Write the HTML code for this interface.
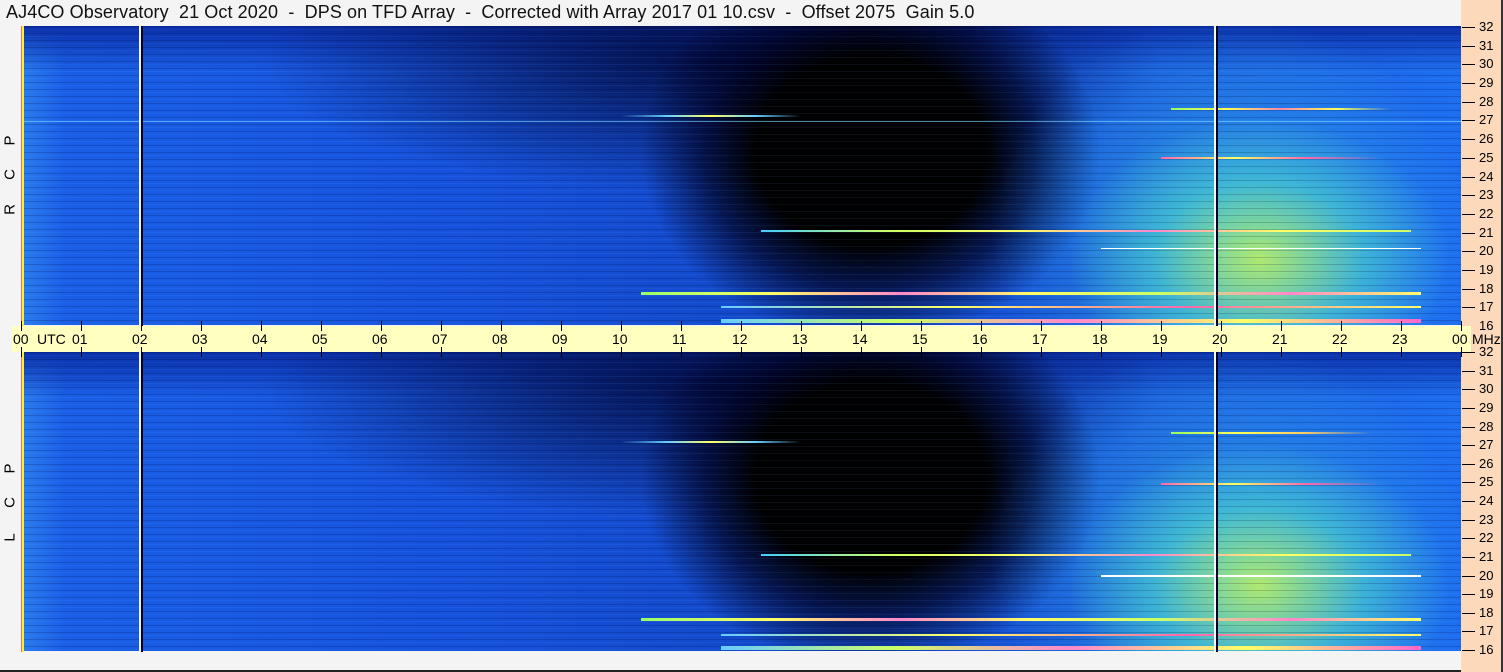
<!DOCTYPE html>
<html><head><meta charset="utf-8"><style>
*{margin:0;padding:0;box-sizing:border-box}
body{width:1503px;height:672px;background:#f4f4f4;position:relative;overflow:hidden;font-family:"Liberation Sans",sans-serif;border-bottom:2px solid #222;}
.title{position:absolute;left:6px;top:2px;font-size:18px;color:#111;white-space:pre;letter-spacing:0.1px}
.right{position:absolute;left:1461px;top:0;width:42px;height:672px;background:#fdd9bb;border-right:2px solid #333}
.spec{position:absolute;left:21px;width:1440px;height:299px;overflow:hidden;
background:
repeating-linear-gradient(to bottom,rgba(0,0,40,.18) 0 1px,transparent 1px 3px,rgba(120,170,255,.08) 3px 4px,transparent 4px 7px),
radial-gradient(ellipse 190px 140px at 86% 78%,rgba(200,250,90,.85),rgba(80,220,200,.55) 55%,transparent 100%),
radial-gradient(ellipse 240px 220px at 84% 70%,rgba(60,200,230,.55),transparent 100%),
radial-gradient(ellipse 230px 190px at 59% 42%,#000 0%,#000 50%,rgba(0,0,30,.7) 72%,transparent 100%),
radial-gradient(ellipse 450px 130px at 48% 12%,rgba(0,5,50,.85),transparent 100%),
linear-gradient(to bottom,#0a2fa8 0%,transparent 15%),
linear-gradient(to right,#2a7cf0 0%,#1a5fe6 3%,#1652dc 30%,#1248c8 55%,#1a5ee0 80%,#1d6ef0 100%);}
.s1{top:26px}.s2{top:352px}
.band{position:absolute;left:12px;top:326px;width:1459px;height:26px;background:#ffffc0}
.vl{position:absolute;width:2px}
.tick{position:absolute;width:1px;background:#000}
.hl{position:absolute;font-size:14px;color:#000;top:331px}
.rt{position:absolute;left:1462px;width:13px;height:1px;background:#000}
.rl{position:absolute;left:1479px;font-size:13px;color:#000}
.lab{position:absolute;left:2px;font-size:15px;color:#000;transform:rotate(-90deg);transform-origin:center;width:16px;text-align:center}
.st{position:absolute;height:2px}
</style></head><body>
<div class="right"></div>
<div class="title">AJ4CO Observatory  21 Oct 2020  -  DPS on TFD Array  -  Corrected with Array 2017 01 10.csv  -  Offset 2075  Gain 5.0</div>

<div class="spec s1">
<div class="st" style="left:600px;top:89px;width:180px;background:linear-gradient(90deg,transparent,#6cf,#ff6,#6cf,transparent)"></div>
<div class="st" style="left:1150px;top:82px;width:220px;background:linear-gradient(90deg,#9f6,#ff5,#f8a,#ff5,transparent)"></div>
<div class="st" style="left:1140px;top:131px;width:220px;background:linear-gradient(90deg,#f6a,#ff6,#f6a,transparent)"></div>
<div class="st" style="left:740px;top:204px;width:650px;background:linear-gradient(90deg,#4cf,#cf6,#ff6,#f8c,#ff6,#cf6)"></div>
<div class="st" style="left:1080px;top:222px;width:320px;height:1px;background:#fff"></div>
<div class="st" style="left:620px;top:266px;width:780px;height:3px;background:linear-gradient(90deg,#9f6,#ff6,#f8c,#ff6,#cf6,#f8c,#ff6)"></div>
<div class="st" style="left:700px;top:280px;width:700px;background:linear-gradient(90deg,#6cf,#ff6,#f6a,#ff6)"></div>
<div class="st" style="left:700px;top:293px;width:700px;height:4px;background:linear-gradient(90deg,#6cf,#cf6,#f8c,#ff6,#f6c)"></div>
<div class="st" style="left:0;top:95px;width:1440px;height:1px;background:rgba(120,220,255,.6)"></div>
</div>
<div class="spec s2">
<div class="st" style="left:600px;top:89px;width:180px;background:linear-gradient(90deg,transparent,#6cf,#ff6,#6cf,transparent)"></div>
<div class="st" style="left:1150px;top:80px;width:200px;background:linear-gradient(90deg,#9f6,#ff5,#fc6,transparent)"></div>
<div class="st" style="left:1140px;top:131px;width:220px;background:linear-gradient(90deg,#f6a,#ff6,#f6a,transparent)"></div>
<div class="st" style="left:740px;top:202px;width:650px;background:linear-gradient(90deg,#4cf,#cf6,#ff6,#f8c,#ff6,#cf6)"></div>
<div class="st" style="left:1080px;top:223px;width:320px;background:#fff"></div>
<div class="st" style="left:620px;top:266px;width:780px;height:3px;background:linear-gradient(90deg,#9f6,#ff6,#f8c,#ff6,#cf6,#f8c,#ff6)"></div>
<div class="st" style="left:700px;top:282px;width:700px;background:linear-gradient(90deg,#6cf,#ff6,#f6a,#ff6)"></div>
<div class="st" style="left:700px;top:294px;width:700px;height:4px;background:linear-gradient(90deg,#6cf,#cf6,#f8c,#ff6,#f6c)"></div>
</div>

<div class="vl" style="left:21px;top:26px;height:626px;width:1px;background:#f66"></div>
<div class="vl" style="left:22px;top:26px;height:626px;background:#fe3"></div>
<div class="vl" style="left:139px;top:26px;height:626px;background:#e8f4ff"></div>
<div class="vl" style="left:141px;top:26px;height:626px;background:#001"></div>
<div class="vl" style="left:1214px;top:26px;height:626px;background:#f4f8ff"></div>
<div class="vl" style="left:1216px;top:26px;height:626px;background:#002"></div>

<div class="band"></div>
<div id="ticks"></div>
<span class="hl" style="left:13px">00</span><span class="hl" style="left:37px">UTC</span><span class="hl" style="left:72px">01</span>
<span class="hl" style="left:132px">02</span><span class="hl" style="left:192px">03</span><span class="hl" style="left:252px">04</span><span class="hl" style="left:312px">05</span><span class="hl" style="left:372px">06</span><span class="hl" style="left:432px">07</span><span class="hl" style="left:492px">08</span><span class="hl" style="left:552px">09</span><span class="hl" style="left:612px">10</span><span class="hl" style="left:672px">11</span><span class="hl" style="left:732px">12</span><span class="hl" style="left:792px">13</span><span class="hl" style="left:852px">14</span><span class="hl" style="left:912px">15</span><span class="hl" style="left:972px">16</span><span class="hl" style="left:1032px">17</span><span class="hl" style="left:1092px">18</span><span class="hl" style="left:1152px">19</span><span class="hl" style="left:1212px">20</span><span class="hl" style="left:1272px">21</span><span class="hl" style="left:1332px">22</span><span class="hl" style="left:1392px">23</span><span class="hl" style="left:1452px">00</span><span class="hl" style="left:1472px">MHz</span>

<div class="lab" style="top:132px">P</div><div class="lab" style="top:166px">C</div><div class="lab" style="top:201px">R</div>
<div class="lab" style="top:460px">P</div><div class="lab" style="top:494px">C</div><div class="lab" style="top:529px">L</div>

<script>
var h='';
for(var i=0;i<=24;i++){var x=21+i*60;h+='<div class="tick" style="left:'+x+'px;top:321px;height:10px"></div><div class="tick" style="left:'+x+'px;top:347px;height:10px"></div>';}
[[27,326],[352,650]].forEach(function(p){for(var k=0;k<=16;k++){var y=Math.round(p[0]+(p[1]-p[0])*k/16);if(!(p[0]==27&&k==16))h+='<div class="rt" style="top:'+y+'px"></div>';h+='<span class="rl" style="top:'+(y-8)+'px">'+(32-k)+'</span>';}});
document.getElementById('ticks').innerHTML=h;
</script>
</body></html>
